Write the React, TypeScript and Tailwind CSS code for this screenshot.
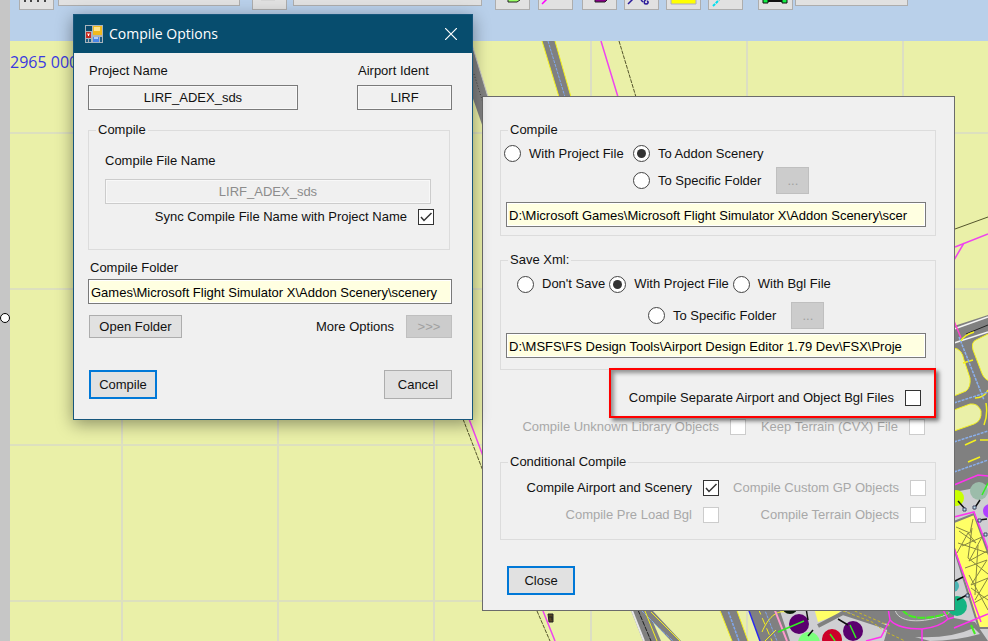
import React from 'react';
import clsx from 'clsx';

const pathField =
  'h-[25px] border border-[#7a7a7a] bg-[#ffffe1] px-[2px] pt-px text-[13px] text-black shadow-[inset_0_0_0_1px_#ffffff] outline-none';
const nameField = 'h-[25px] w-full border bg-[#f0f0f0] text-center text-[13px] shadow-[inset_0_0_0_1px_#f8f8f8] outline-none';

type ButtonProps = {
  children: React.ReactNode;
  className: string;
  disabled?: boolean;
  focused?: boolean;
  label?: string;
};

function Button({ children, className, disabled, focused, label }: ButtonProps) {
  return (
    <button
      type="button"
      disabled={disabled}
      aria-label={label}
      className={clsx(
        'flex items-center justify-center pt-px',
        focused && 'border-2 border-[#0078d7] bg-[#e1e1e1]',
        disabled && 'border border-[#bfbfbf] bg-[#cccccc] text-[#a0a0a0]',
        !focused && !disabled && 'border border-[#adadad] bg-[#e1e1e1]',
        className
      )}
    >
      {children}
    </button>
  );
}

type CheckProps = {
  label: string;
  checked?: boolean;
  disabled?: boolean;
};

function Check({ label, checked, disabled }: CheckProps) {
  return (
    <label className={clsx('flex items-center gap-[11px] whitespace-nowrap leading-[18px]', disabled && 'text-[#a8a8a8]')}>
      {label}
      <span className="relative size-4 shrink-0">
        <input
          type="checkbox"
          defaultChecked={checked}
          disabled={disabled}
          className={clsx('peer block size-4 appearance-none border bg-white', disabled ? 'border-[#cccccc]' : 'border-[#333333]')}
        />
        <svg viewBox="0 0 16 16" className="pointer-events-none absolute inset-0 hidden size-4 peer-checked:block">
          <path d="M3 8 L6 11.5 L13.5 4" fill="none" stroke="#333" strokeWidth="1.5" />
        </svg>
      </span>
    </label>
  );
}

type RadioProps = {
  name: string;
  label: string;
  checked?: boolean;
};

function Radio({ name, label, checked }: RadioProps) {
  return (
    <label className="flex items-center gap-2 whitespace-nowrap">
      <input
        type="radio"
        name={name}
        defaultChecked={checked}
        className="grid size-[17px] shrink-0 appearance-none place-items-center rounded-full border border-[#444444] bg-white before:hidden before:size-[9px] before:rounded-full before:bg-[#333333] checked:before:block"
      />
      {label}
    </label>
  );
}

type GroupProps = {
  title: string;
  className?: string;
  bodyClassName: string;
  children: React.ReactNode;
};

function Group({ title, className, bodyClassName, children }: GroupProps) {
  return (
    <fieldset className={clsx('min-w-0 border border-[#dcdcdc]', className)}>
      <legend className="ml-[7px] px-[2px]">{title}</legend>
      <div className={bodyClassName}>{children}</div>
    </fieldset>
  );
}

function ToolButton({ label, className, children }: { label: string; className?: string; children: React.ReactNode }) {
  return (
    <button
      type="button"
      aria-label={label}
      className={clsx('flex h-[10px] w-[35px] shrink-0 justify-center overflow-hidden border border-t-0 border-[#adadad] bg-[#e1e1e1]', className)}
    >
      <svg viewBox="0 0 33 9" className="h-[9px] w-[33px]">
        {children}
      </svg>
    </button>
  );
}

function Toolbar() {
  return (
    <div className="flex h-[41px] items-start overflow-hidden bg-[#b9d0ea] pl-[9px]">
      <ToolButton label="Ruler">
        <path d="M5 0v2M11 0v2M18 0v2M25 0v2" stroke="#111" strokeWidth="1.5" />
      </ToolButton>
      <div className="ml-1 h-[6px] w-[182px] shrink-0 border border-t-0 border-[#adadad] bg-[#e1e1e1]" />
      <ToolButton label="View" className="ml-3">
        <path d="M8 0h14" stroke="#ccc" />
      </ToolButton>
      <div className="ml-[6px] h-[6px] w-[189px] shrink-0 border border-t-0 border-[#adadad] bg-[#e1e1e1]" />
      <ToolButton label="Apron" className="ml-[13px]">
        <path d="M12 -2V2h9l3-2v-2z" fill="#99ff66" stroke="#222" />
      </ToolButton>
      <ToolButton label="Taxiway line" className="ml-2">
        <path d="M3 4L8 -1" stroke="#ff00ff" strokeWidth="1.5" />
      </ToolButton>
      <ToolButton label="Building" className="ml-[9px]">
        <path d="M12 -2V2h10l2-2v-2z" fill="#880088" stroke="#222" />
      </ToolButton>
      <ToolButton label="Path" className="ml-[7px]">
        <path d="M3 4L8 -1M16 0l2 2M22 -1c-4 2-3 5-1 5s3-2 1-3" fill="none" stroke="#2a1a9a" strokeWidth="1.5" />
      </ToolButton>
      <ToolButton label="Fill" className="ml-[7px]">
        <path d="M4 -2h25v6H4z" fill="#ffff00" stroke="#aaaacc" />
      </ToolButton>
      <ToolButton label="Edge" className="ml-[7px]">
        <path d="M10 0l4-3" stroke="#333" />
        <path d="M4 6l6-6" stroke="#00e0ee" strokeWidth="2" strokeDasharray="3 1" />
      </ToolButton>
      <ToolButton label="Jetway" className="ml-[15px]">
        <path d="M4 -1h5v4H4zM23 -1h5v4h-5z" fill="#11ee44" stroke="#111" />
        <path d="M9 1h14" stroke="#111" strokeWidth="2" />
      </ToolButton>
      <div className="ml-[2px] h-[6px] w-[113px] shrink-0 border border-t-0 border-[#adadad] bg-[#e1e1e1]" />
    </div>
  );
}

const columns = [122, 278, 434, 591, 747, 903];
const rows = [133, 289, 445, 601];

const stands = [
  { x: 799, y: 624, r: 10, fill: '#5a006e' },
  { x: 809, y: 643, r: 11, fill: '#7dff7d' },
  { x: 832, y: 639, r: 10, fill: '#cc0028' },
  { x: 853, y: 631, r: 10, fill: '#5a006e' },
  { x: 790, y: 606, r: 8, fill: '#0a1a0a' },
  { x: 956, y: 498, r: 8, fill: '#c8ff00' },
  { x: 979, y: 491, r: 9, fill: '#9cbcaa' },
  { x: 990, y: 511, r: 7, fill: '#b040ff' },
  { x: 953, y: 586, r: 6, fill: '#4ab4b4' },
  { x: 957, y: 606, r: 10, fill: '#14b482' }
];

function AirportMap() {
  return (
    <svg className="absolute inset-0 size-full" role="img" aria-label="Airport map">
      <g transform="translate(-10 -41)" fill="none">
        {columns.map((x) => (
          <line key={x} x1={x} x2={x} y1="41" y2="641" stroke="#d7d8cc" strokeWidth="1.5" />
        ))}
        {rows.map((y) => (
          <line key={y} x1="10" x2="988" y1={y} y2={y} stroke="#dde0be" strokeWidth="2" />
        ))}
        <text x="10" y="68" fill="#3a3ae0" fontSize="16" className="font-['Open_Sans',sans-serif]">
          2965 000
        </text>

        {/* runway crossing at the top */}
        <path d="M542 41L559 97H571L555 41z" fill="#808080" />
        <path d="M542 41L559 97M555 41L571 97" stroke="#f4f01e" />
        <path d="M548 41L565 97" stroke="#7fa6ee" strokeDasharray="3 1" />
        <path d="M470 38L488 97V142L470 90z" fill="#808080" />
        <path d="M470 38L488 97" stroke="#c8c8c8" />
        <path d="M474 74L484 106" stroke="#444" strokeDasharray="1 2" />

        {/* boundary lines */}
        <path d="M601 41L618 97M469 419L483 456M543 611L555 641" stroke="#ee44ee" strokeWidth="1.5" />
        <path d="M619 41L636 97M463 419L483 471M537 611L550 641" stroke="#55552c" strokeDasharray="4 1" />
        <path d="M955 229L988 217" stroke="#55552c" />
        <path d="M955 247L988 234M964 243L954 260" stroke="#ee44ee" strokeWidth="1.5" />
        <path d="M548 614h5v8h-4zM549 617h3v3" fill="#554422" stroke="#222" />

        {/* taxiways below the options window */}
        <path d="M630 608L643 641H681L652 610z" fill="#808080" />
        <path d="M653 622L661 641H671z" fill="#eaf0a8" />
        <path d="M631 608L644 641" stroke="#e8e8e8" strokeWidth="2" />
        <path d="M638 610L651 641" stroke="#222" strokeDasharray="5 1" />
        <path d="M641 610L659 628L673 641" stroke="#7fa6ee" strokeDasharray="4 1" />
        <path d="M651 612L680 641M645 611l6 15 6 15" stroke="#f4f01e" />
        <path d="M719 608L732 641H748L736 608z" fill="#808080" />
        <path d="M719 608L732 641M736 608L748 641" stroke="#f4f01e" />
        <path d="M727 608L739 641" stroke="#7fa6ee" strokeWidth="1.5" strokeDasharray="3 1" />
        <path d="M748 608L760 641H988V600H748z" fill="#808080" />
        <path d="M748 608L760 641" stroke="#2a2aee" strokeWidth="1.5" />
        <path d="M758 608l14 33" stroke="#f4f01e" strokeDasharray="7 4" />
        <path d="M764 608l13 33" stroke="#7fa6ee" strokeDasharray="3 1" />

        {/* apron and roads */}
        <path d="M779 608H838L872 622L889 624L884 641H790z" fill="#cfcfd2" />
        <path d="M814 608H843L837 615L818 622z" fill="#ffff66" />
        <path d="M818 626L843 613L880 625L920 641" stroke="#808080" strokeWidth="4" />
        <path d="M838 609L872 622L886 632L905 641M850 609L890 626" stroke="#c8b828" strokeDasharray="3 2" />
        <path d="M895 608C895 620 914 626 946 615L955 608z" fill="#8a8a8a" stroke="#d0d0d0" />
        <path d="M902 609C908 620 928 620 948 613" stroke="#44ee22" strokeWidth="2" strokeDasharray="8 1" />
        <path d="M915 637Q950 639 974 628L980 634Q955 641 930 641z" fill="#cfcfd2" />
        <path d="M971 625l4 9" stroke="#44ee22" strokeWidth="2" />
        <path d="M762 632C768 618 776 610 786 612M765 641L776 630" stroke="#f4f01e" />
        <path d="M774 608L787 641" stroke="#ff99cc" strokeWidth="2" />
        <path d="M888 608L890 620Q898 629 922 629Q940 627 948 619L988 608M890 620L881 637L866 641M922 629V641M942 608L948 619" stroke="#ff33ee" strokeWidth="1.5" />

        {/* right edge taxiways */}
        <path d="M954 326L988 315V486H954z" fill="#808080" />
        <path d="M954 348Q962 349 964 360L970 378Q971 387 966 391L954 396z" fill="#eaf0a8" stroke="#f4f01e" />
        <path d="M990 333L976 340Q971 342 973 350L981 371Q984 380 990 381z" fill="#eaf0a8" stroke="#f4f01e" />
        <path d="M954 410L970 404Q978 403 981 411Q982 421 974 424L954 431z" fill="#eaf0a8" stroke="#f4f01e" />
        <path d="M954 329L988 317M954 343L988 332" stroke="#f4f4f4" strokeWidth="1.5" />
        <path d="M966 334L988 325" stroke="#222" />
        <path d="M961 341Q964 335 974 332M963 363l10-3M975 398Q984 398 988 390M984 425Q988 415 986 403" stroke="#f4f01e" strokeWidth="1.5" />
        <path d="M959 337L984 400M954 403L988 392M954 442L988 431M954 472L988 460" stroke="#8ab0ee" strokeWidth="1.5" strokeDasharray="3 1" />
        <path d="M965 445l11-5M980 440h8M968 462l12-5" stroke="#f4f01e" strokeWidth="1.5" />
        <path d="M954 321L961 338" stroke="#ff44cc" strokeWidth="1.5" />

        {/* terminal area */}
        <path d="M954 490L972 480L988 476V641L975 622L954 618z" fill="#cfcfd2" />
        <path d="M954 484L976 475H988V485L970 489L954 492z" fill="#808080" />
        <path d="M954 485L978 475L988 476" stroke="#ff33ee" strokeWidth="1.5" />
        <path d="M954 522L974 514L990 558V628H979L954 548z" fill="#ffff66" stroke="#808080" strokeWidth="2" />
        <path
          d="M956 527l14 6 3-14M959 531l17 12-8-10-11 20M962 546l20-9-13 24 20-11M965 568l22-8-16 25 17-7-13 22M971 588l17 12M974 603l14-8M958 543l30 10M972 528l-4 30 20 16M969 575l19 35M978 545l-3 50"
          stroke="#888840"
        />
        <path d="M954 517L974 512L990 554M954 548L981 622M954 628L988 614" stroke="#ff33ee" strokeWidth="1.5" />
        {stands.map((stand) => (
          <circle key={`${stand.x}-${stand.y}`} cx={stand.x} cy={stand.y} r={stand.r} fill={stand.fill} />
        ))}
        <path d="M958 501l7 8M980 500l-6 9M987 519l-8 1M955 581l8-4M957 600l12-6M806 608l2 12M808 636l5-6M838 619l10 6" stroke="#111" strokeWidth="1.5" />
        <path d="M778 632L804 621M982 495l6-12M850 625l6 13M830 634l5 7" stroke="#33ee22" strokeWidth="1.5" />
        <path d="M963 508h3v3h-3zM973 506h3v3h-3zM978 519h3v3h-3zM984 533h3v3h-3zM966 594h3v3h-3z" fill="#bfe8ee" stroke="#446" />
      </g>
    </svg>
  );
}

function CompileDialog() {
  return (
    <section className="absolute left-[73px] top-[14px] w-[400px] border border-[#17567c] bg-[#f0f0f0] shadow-[0_4px_16px_rgba(0,0,0,0.4)]">
      <header className="flex h-[38px] items-center bg-[#074d6e] pl-[11px] text-white">
        <svg viewBox="0 0 18 18" className="size-[18px]">
          <path d="M0 0h18v18H0z" fill="#a9b4bc" />
          <path d="M1 1h6v5H1z" fill="#0b4a6c" />
          <path d="M1 7h5v6H1z" fill="#c42a22" />
          <path d="M2 8h3v2H2z" fill="#e8776c" />
          <path d="M3 9h1v2H3z" fill="#fff" />
          <path d="M8 1h9v9H8z" fill="#f2b91c" />
          <path d="M9 2h6v4H9z" fill="#ffe38a" />
          <path d="M1 14h2v3H1zM4 14h2v3H4zM15 12h2v5h-2z" fill="#1c5a80" />
          <path d="M8 12h6v5H8z" fill="#4c86e8" />
          <path d="M9 12h4v2H9z" fill="#b0ccff" />
        </svg>
        <h1 className="ml-[6px] flex-1 font-['Open_Sans',sans-serif] text-sm">Compile Options</h1>
        <button type="button" aria-label="Close window" className="flex w-[42px] items-center justify-center self-stretch">
          <svg viewBox="0 0 12 12" className="size-3">
            <path d="M0 0L12 12M12 0L0 12" stroke="#fff" strokeWidth="1.2" />
          </svg>
        </button>
      </header>
      <div className="flex flex-col pb-5 pl-[14px] pr-5 pt-2">
        <div className="flex justify-between">
          <label className="flex w-[210px] flex-col gap-1">
            <span className="ml-px">Project Name</span>
            <input readOnly value="LIRF_ADEX_sds" className={clsx(nameField, 'border-[#7a7a7a]')} />
          </label>
          <label className="flex w-[95px] flex-col gap-1">
            <span className="ml-px">Airport Ident</span>
            <input readOnly value="LIRF" className={clsx(nameField, 'border-[#7a7a7a]')} />
          </label>
        </div>
        <Group title="Compile" className="mr-[2px] mt-[10px]" bodyClassName="pb-[23px] pl-4 pr-[15px]">
          <label className="mr-[3px] mt-[11px] flex flex-col gap-2">
            Compile File Name
            <input disabled value="LIRF_ADEX_sds" className={clsx(nameField, 'border-[#cccccc] text-[#8c8c8c]')} />
          </label>
          <div className="mt-1 flex justify-end">
            <Check label="Sync Compile File Name with Project Name" checked />
          </div>
        </Group>
        <label className="mt-2 flex flex-col gap-px">
          <span className="ml-[2px]">Compile Folder</span>
          <input defaultValue="Games\Microsoft Flight Simulator X\Addon Scenery\scenery" className={pathField} />
        </label>
        <div className="mt-[11px] flex items-center pl-px">
          <Button className="h-[23px] w-[93px]">Open Folder</Button>
          <span className="ml-auto mr-3">More Options</span>
          <Button disabled label="More Options" className="h-[23px] w-[46px]">
            &gt;&gt;&gt;
          </Button>
        </div>
        <div className="mt-8 flex justify-between pl-px">
          <Button focused className="h-[29px] w-[68px]">
            Compile
          </Button>
          <Button className="h-[29px] w-[68px]">Cancel</Button>
        </div>
      </div>
    </section>
  );
}

function OptionsDialog() {
  return (
    <section className="absolute left-[482px] top-[96px] flex w-[473px] flex-col border border-[#6b6b6b] bg-[#f0f0f0] pb-[15px] pl-[17px] pr-[18px] pt-[23px]">
      <Group title="Compile" bodyClassName="pb-2 pl-[5px] pr-[9px]">
        <div className="-ml-[2px] grid auto-rows-[27px] grid-cols-[129px_1fr] items-center">
          <Radio name="target" label="With Project File" />
          <Radio name="target" label="To Addon Scenery" checked />
          <div className="col-start-2 flex items-center gap-[15px]">
            <Radio name="target" label="To Specific Folder" />
            <Button disabled label="Browse compile folder" className="h-[27px] w-[33px]">
              ...
            </Button>
          </div>
        </div>
        <input
          aria-label="Compile path"
          defaultValue="D:\Microsoft Games\Microsoft Flight Simulator X\Addon Scenery\scer"
          className={clsx(pathField, 'mt-2 w-full')}
        />
      </Group>

      <Group title="Save Xml:" className="mt-[14px]" bodyClassName="pb-[11px] pl-[5px] pr-[9px]">
        <div className="ml-[11px] flex h-7 items-center gap-1">
          <Radio name="xml" label="Don't Save" />
          <Radio name="xml" label="With Project File" checked />
          <Radio name="xml" label="With Bgl File" />
        </div>
        <div className="ml-[142px] mt-1 flex items-center gap-[15px]">
          <Radio name="xml" label="To Specific Folder" />
          <Button disabled label="Browse xml folder" className="h-[27px] w-[33px]">
            ...
          </Button>
        </div>
        <input
          aria-label="Xml path"
          defaultValue="D:\MSFS\FS Design Tools\Airport Design Editor 1.79 Dev\FSX\Proje"
          className={clsx(pathField, 'mt-1 w-full')}
        />
      </Group>

      <div className="z-10 -mt-[2px] flex h-[50px] items-center self-end border-2 border-[#ff0000] pl-[18px] pr-[13px] pt-[10px] shadow-[3px_3px_4px_rgba(0,0,0,0.5),inset_3px_3px_4px_rgba(0,0,0,0.4)]">
        <Check label="Compile Separate Airport and Object Bgl Files" />
      </div>
      <div className="flex justify-end gap-[15px] pr-[11px]">
        <Check label="Compile Unknown Library Objects" disabled />
        <Check label="Keep Terrain (CVX) File" disabled />
      </div>

      <Group title="Conditional Compile" className="mt-4" bodyClassName="pb-[11px] pr-[9px]">
        <div className="mt-[2px] grid auto-rows-[27px] grid-cols-[218px_1fr] items-center justify-items-end">
          <Check label="Compile Airport and Scenery" checked />
          <Check label="Compile Custom GP Objects" disabled />
          <Check label="Compile Pre Load Bgl" disabled />
          <Check label="Compile Terrain Objects" disabled />
        </div>
      </Group>

      <Button focused className="ml-[7px] mt-[26px] h-[29px] w-[68px]">
        Close
      </Button>
    </section>
  );
}

export default function App() {
  return (
    <main className="relative flex min-h-screen overflow-hidden bg-[#eaf0a8] font-['Liberation_Sans',Arial,sans-serif] text-[13px] leading-5 text-[#111111]">
      <div className="w-[10px] shrink-0 bg-[#c6c6c6]" />
      <div className="flex min-w-0 flex-1 flex-col">
        <Toolbar />
        <div className="relative flex-1 overflow-hidden">
          <AirportMap />
        </div>
      </div>
      <span className="absolute left-0 top-[313px] size-[10px] rounded-full border border-black bg-white" />
      <OptionsDialog />
      <CompileDialog />
    </main>
  );
}
